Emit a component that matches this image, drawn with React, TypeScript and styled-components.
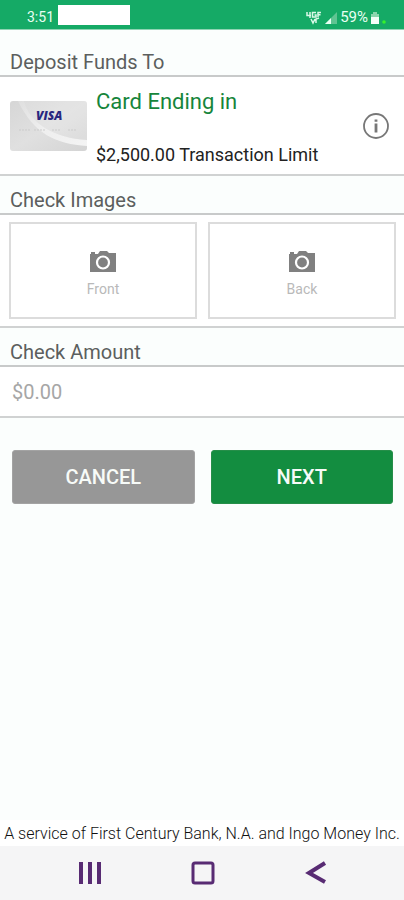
import React, { useState } from "react";
import styled, { createGlobalStyle } from "styled-components";

const GlobalStyle = createGlobalStyle`
  *, *::before, *::after { box-sizing: border-box; }
  body {
    margin: 0;
    background: #fbfefd;
    font-family: Roboto, "Liberation Sans", sans-serif;
    color: #222;
  }
  button, input { font-family: inherit; }
`;

const Screen = styled.div`
  min-height: 100vh;
  display: flex;
  flex-direction: column;
`;

const StatusBar = styled.header`
  display: flex;
  align-items: flex-end;
  height: 30px;
  padding: 0 18px 4px 27px;
  background: #15aa66;
  border-bottom: 1px solid #8fd4b3;
  color: #e9fff3;
  font-size: 14px;
  line-height: 15px;
`;

const NotificationBlank = styled.span`
  width: 72px;
  height: 20px;
  margin-left: 4px;
  background: #fff;
`;

const StatusIcons = styled.div`
  display: flex;
  align-items: center;
  gap: 3px;
  margin-left: auto;
  font-size: 15px;
`;

const SectionTitle = styled.h2`
  margin: 0;
  padding: 12px 10px 0;
  height: 37px;
  font-size: 20px;
  line-height: 24px;
  font-weight: 400;
  color: #5c5f5e;
`;

const FirstTitle = styled(SectionTitle)`
  height: 45px;
  padding-top: 20px;
`;

const Panel = styled.section`
  background: #fff;
  border-top: 2px solid #c8caca;
  border-bottom: 2px solid #d0d2d2;
`;

const CardRow = styled(Panel)`
  display: flex;
  align-items: center;
  padding: 8px 14px 8px 10px;
`;

const CardDetails = styled.div`
  flex: 1;
  margin-left: 9px;
  padding-top: 3px;
`;

const CardName = styled.p`
  margin: 0 0 28px;
  font-size: 22px;
  line-height: 28px;
  color: #16853b;
`;

const CardLimit = styled.p`
  margin: 0;
  font-size: 18px;
  line-height: 22px;
  color: #222;
  white-space: nowrap;
`;

const InfoButton = styled.button`
  display: flex;
  padding: 0;
  border: 0;
  background: none;
  color: #777;
`;

const ImageRow = styled(Panel)`
  display: grid;
  grid-template-columns: 1fr 1fr;
  gap: 11px;
  padding: 7px 8px 7px 9px;
`;

const CaptureButton = styled.button`
  display: flex;
  flex-direction: column;
  align-items: center;
  justify-content: center;
  gap: 9px;
  height: 97px;
  padding: 6px 0 0;
  background: #fff;
  border: 2px solid #dcdcdc;
  color: #b9b9b9;
  font-size: 14px;
  line-height: 16px;
`;

const AmountInput = styled.input`
  display: block;
  width: 100%;
  height: 49px;
  padding: 0 12px;
  border: 0;
  background: transparent;
  color: #444;
  font-size: 20px;
  &::placeholder { color: #a6a6a6; opacity: 1; }
`;

const Actions = styled.div`
  display: grid;
  grid-template-columns: 1fr 1fr;
  gap: 16px;
  padding: 32px 11px 0 12px;
`;

const ActionButton = styled.button<{ $primary?: boolean }>`
  height: 54px;
  border: 1px solid ${(p) => (p.$primary ? "#268e49" : "#a3a3a3")};
  border-radius: 3px;
  background: ${(p) => (p.$primary ? "#138d40" : "#979797")};
  color: #f7fbf8;
  font-size: 20px;
  font-weight: 500;
`;

const Disclosure = styled.p`
  margin: auto 0 0;
  padding: 4px 0 3px;
  background: #fff;
  text-align: center;
  font-size: 16px;
  line-height: 19px;
  font-weight: 300;
  color: #111;
`;

const NavBar = styled.nav`
  display: flex;
  align-items: center;
  justify-content: center;
  gap: 89px;
  height: 54px;
  padding-left: 2px;
  background: #f5f5f6;
`;

const NavButton = styled.button`
  display: flex;
  padding: 0;
  border: 0;
  background: none;
  color: #582b73;
`;

function VisaCard() {
  return (
    <svg width="77" height="50" viewBox="0 0 77 50" role="img" aria-label="Visa card">
      <defs>
        <linearGradient id="silver" x1="0" y1="0" x2="1" y2="1">
          <stop offset="0" stopColor="#d6d6d6" />
          <stop offset="0.5" stopColor="#e0e0e0" />
          <stop offset="1" stopColor="#d4d4d4" />
        </linearGradient>
        <linearGradient id="shine" x1="0" y1="0" x2="1" y2="1">
          <stop offset="0" stopColor="#fff" stopOpacity="0.2" />
          <stop offset="1" stopColor="#fff" stopOpacity="0.75" />
        </linearGradient>
        <clipPath id="cardShape"><rect width="77" height="50" rx="3" /></clipPath>
      </defs>
      <g clipPath="url(#cardShape)">
        <rect width="77" height="50" fill="url(#silver)" />
        <path d="M14 0C20 23 45 37 77 39V45C46 43 24 33 8 0Z" fill="url(#shine)" />
        <path d="M14 0C20 23 45 37 77 39V0Z" fill="#fff" fillOpacity="0.15" />
        <path d="M9 29H20M24 29H35M42 29H51M58 29H67" stroke="#cbcbcb" strokeDasharray="2 1" />
      </g>
      <text x="26" y="19" fontFamily="Open Sans, sans-serif" fontSize="12" fontWeight="800" fontStyle="italic" fill="#282780">
        VISA
      </text>
    </svg>
  );
}

function CameraIcon() {
  return (
    <svg width="26" height="21" viewBox="0 0 26 21" aria-hidden="true">
      <path d="M0 3H1V1H5V3H8L10 0H17L19 2H26V21H0Z" fill="#808080" />
      <circle cx="13" cy="11.5" r="6" fill="#808080" stroke="#fff" strokeWidth="2.2" />
    </svg>
  );
}

function InfoIcon() {
  return (
    <svg width="28" height="28" viewBox="0 0 28 28" fill="none" stroke="currentColor" aria-hidden="true">
      <circle cx="14" cy="14" r="12" strokeWidth="1.8" />
      <path d="M14 11.5V20.5M14 7.5V9.8" strokeWidth="2.8" />
    </svg>
  );
}

function NetworkIcon() {
  return (
    <svg width="16" height="14" viewBox="0 0 16 14" fill="none" stroke="#d9f8e7" strokeWidth="1.5" aria-hidden="true">
      <path d="M1 1V4.5H5M4 1V7M10 1.5H6.5V6H10V4H8.5M15 1.5H12V6M12 3.8H14.5M5 8L7 12L9 8M13 7L10 8V12" />
    </svg>
  );
}

function SignalIcon() {
  return (
    <svg width="12" height="12" viewBox="0 0 12 12" aria-hidden="true">
      <path d="M0 12L12 0V12Z" fill="#5fc492" />
      <path d="M0 12L6 6V12Z" fill="#e9fff3" />
    </svg>
  );
}

function BatteryIcon() {
  return (
    <svg width="8" height="12" viewBox="0 0 8 12" aria-hidden="true">
      <path d="M2 0H6V2H8V12H0V2H2Z" fill="#8bd6ae" />
      <path d="M0 5H8V12H0Z" fill="#f3fff8" />
    </svg>
  );
}

function PrivacyDot() {
  return (
    <svg width="4" height="12" viewBox="0 0 4 12" aria-hidden="true">
      <circle cx="2" cy="10" r="1.8" fill="#35f02c" />
    </svg>
  );
}

export default function App() {
  const [amount, setAmount] = useState("");
  return (
    <>
      <GlobalStyle />
      <Screen>
        <StatusBar>
          <span>3:51</span>
          <NotificationBlank />
          <StatusIcons>
            <NetworkIcon />
            <SignalIcon />
            <span>59%</span>
            <BatteryIcon />
            <PrivacyDot />
          </StatusIcons>
        </StatusBar>

        <FirstTitle>Deposit Funds To</FirstTitle>
        <CardRow>
          <VisaCard />
          <CardDetails>
            <CardName>Card Ending in</CardName>
            <CardLimit>$2,500.00 Transaction Limit</CardLimit>
          </CardDetails>
          <InfoButton type="button" aria-label="Card information"><InfoIcon /></InfoButton>
        </CardRow>

        <SectionTitle>Check Images</SectionTitle>
        <ImageRow>
          <CaptureButton type="button"><CameraIcon />Front</CaptureButton>
          <CaptureButton type="button"><CameraIcon />Back</CaptureButton>
        </ImageRow>

        <SectionTitle as="label" htmlFor="amount">Check Amount</SectionTitle>
        <Panel>
          <AmountInput
            id="amount"
            inputMode="decimal"
            placeholder="$0.00"
            value={amount}
            onChange={(e) => setAmount(e.target.value)}
          />
        </Panel>

        <Actions>
          <ActionButton type="button">CANCEL</ActionButton>
          <ActionButton type="button" $primary>NEXT</ActionButton>
        </Actions>

        <Disclosure>A service of First Century Bank, N.A. and Ingo Money Inc.</Disclosure>
        <NavBar>
          <NavButton type="button" aria-label="Recent apps">
            <svg width="24" height="24" viewBox="0 0 24 24" stroke="currentColor" strokeWidth="4">
              <path d="M3 1V23M12 1V23M21 1V23" />
            </svg>
          </NavButton>
          <NavButton type="button" aria-label="Home">
            <svg width="24" height="24" viewBox="0 0 24 24" fill="none" stroke="currentColor" strokeWidth="3">
              <rect x="2" y="2" width="20" height="20" rx="2" />
            </svg>
          </NavButton>
          <NavButton type="button" aria-label="Back">
            <svg width="24" height="24" viewBox="0 0 24 24" fill="none" stroke="currentColor" strokeWidth="4">
              <path d="M21 2L5 12L21 21" />
            </svg>
          </NavButton>
        </NavBar>
      </Screen>
    </>
  );
}
